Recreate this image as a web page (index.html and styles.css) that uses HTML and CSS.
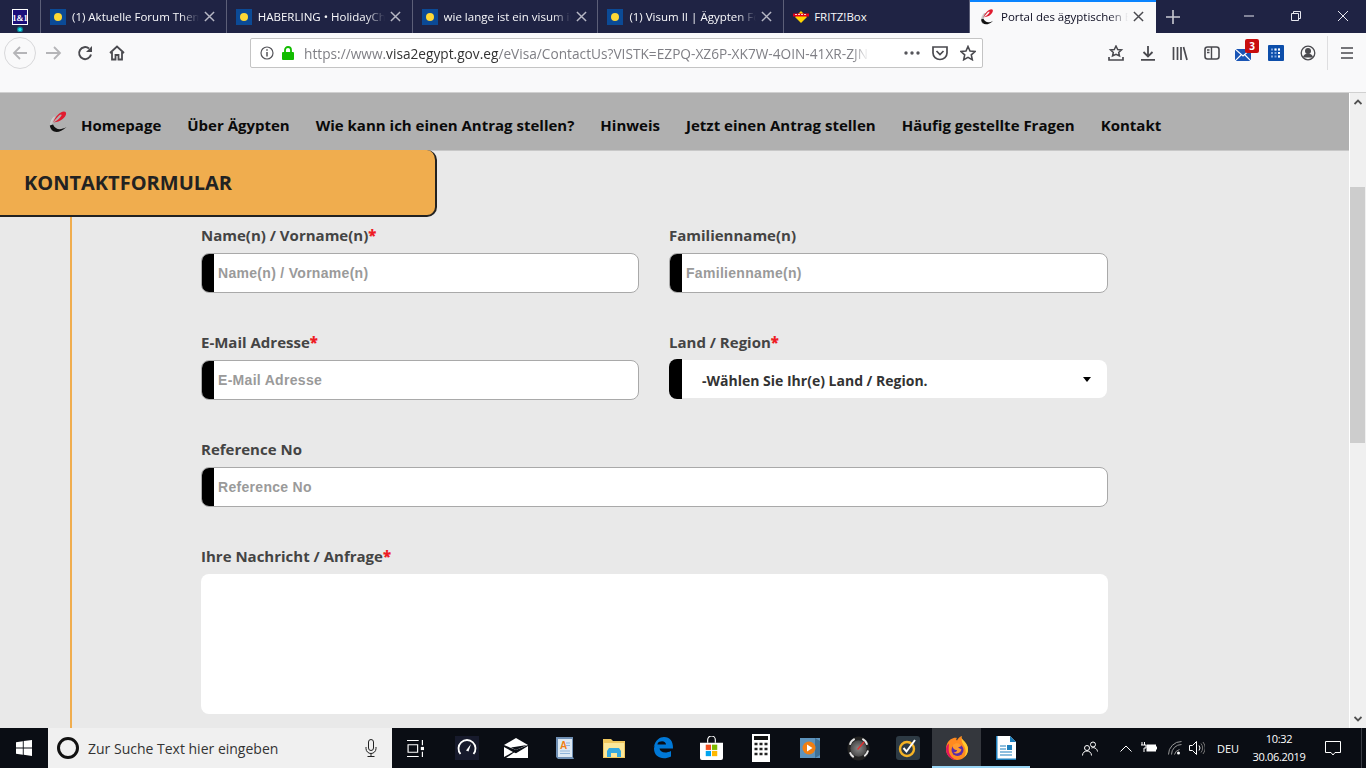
FILE: index.html
```html
<!DOCTYPE html>
<html lang="de">
<head>
<meta charset="utf-8">
<title>Portal des ägyptischen Visums</title>
<link rel="stylesheet" href="styles.css">
</head>
<body>
<svg class="defs" width="0" height="0">
  <defs>
    <linearGradient id="logo-grey" x1="0" y1="0" x2="1" y2="1"><stop offset="0" stop-color="#f4f4f4"/><stop offset="1" stop-color="#666"/></linearGradient>
    <radialGradient id="gauge" cx=".5" cy=".5" r=".5"><stop offset="0" stop-color="#8a8a8a"/><stop offset="1" stop-color="#4a4a4a"/></radialGradient>
  </defs>
  <symbol id="fav-blue" viewBox="0 0 16 16"><rect width="16" height="16" fill="#0b4a96"/><circle cx="8" cy="8" r="4" fill="#fdd835"/></symbol>
  <symbol id="x-icon" viewBox="0 0 12 12"><path d="M1 1l10 10M11 1L1 11" fill="none" stroke="currentColor" stroke-width="1.6"/></symbol>
  <symbol id="e-logo" viewBox="0 0 18 22">
    <path d="M5 5.500C.5 10 -.5 16 3 20.500 3 16 4 11.500 8.500 6Z" fill="url(#logo-grey)"/>
    <path d="M4 11.500C6 6 11 .5 15 .5 18.500 .5 17.500 5.500 13 8.500 11 10 8 11 4.500 11.500 8 9.500 11.500 7 12.500 4.500 13 3 11.500 3 10 4.500 8 6.500 6 9 4 11.500Z" fill="#e01b2f"/>
    <path d="M.8 14.500C2 21.500 9 24 17.500 16 12 19 7 19.500 4 13.500Z" fill="#111"/>
  </symbol>
</svg>

<header class="tabstrip">
  <div class="pinned">
    <svg class="brand" viewBox="0 0 16 23" width="16" height="23"><rect x=".5" y=".5" width="15" height="15" fill="#1b0e7a" stroke="#fff"/><text x="8" y="11.500" text-anchor="middle" class="brand-text">1&amp;1</text><circle cx="8" cy="20.500" r="3" fill="#0d7f92"/><circle cx="8" cy="20.500" r="1.700" fill="#19e6f2"/></svg>
  </div>
  <div class="tab"><svg class="fav"><use href="#fav-blue"/></svg><span class="tab-title">(1) Aktuelle Forum Themen</span><svg class="tab-x"><use href="#x-icon"/></svg></div>
  <div class="tab"><svg class="fav"><use href="#fav-blue"/></svg><span class="tab-title">HABERLING • HolidayCheck</span><svg class="tab-x"><use href="#x-icon"/></svg></div>
  <div class="tab"><svg class="fav"><use href="#fav-blue"/></svg><span class="tab-title">wie lange ist ein visum in</span><svg class="tab-x"><use href="#x-icon"/></svg></div>
  <div class="tab"><svg class="fav"><use href="#fav-blue"/></svg><span class="tab-title">(1) Visum II | Ägypten Forum</span><svg class="tab-x"><use href="#x-icon"/></svg></div>
  <div class="tab">
    <svg class="fav" viewBox="0 0 16 16"><path d="M8 2l6 6-6 6-6-6z" fill="#ffd400"/><path d="M0 4.500h16v3H0z" fill="#e2001a"/><path d="M2 5.500h2M5 5.500h2M8 5.500h2M11 5.500h2" stroke="#fff" stroke-width=".8"/></svg>
    <span class="tab-title plain">FRITZ!Box</span>
  </div>
  <div class="tab active"><svg class="fav"><use href="#e-logo"/></svg><span class="tab-title">Portal des ägyptischen Besuchervisums</span><svg class="tab-x"><use href="#x-icon"/></svg></div>
  <svg class="newtab" viewBox="0 0 14 14" width="14" height="14"><path d="M7 0v14M0 7h14" stroke="#c9cad3" stroke-width="1.600"/></svg>
  <div class="winctl">
    <svg viewBox="0 0 12 12" width="12" height="12"><path d="M1 6h10" stroke="#e6e6ee"/></svg>
    <svg viewBox="0 0 12 12" width="12" height="12"><path d="M1.500 3.500h7v7h-7zM3.500 3.500v-2h7v7h-2" fill="none" stroke="#e6e6ee"/></svg>
    <svg viewBox="0 0 12 12" width="12" height="12"><path d="M1 1l10 10M11 1L1 11" stroke="#e6e6ee"/></svg>
  </div>
</header>

<div class="toolbar">
  <div class="nav-buttons">
    <span class="back"><svg viewBox="0 0 16 16" width="16" height="16"><path d="M15 8H2M8 2L2 8l6 6" fill="none" stroke="#b5b5b8" stroke-width="1.800"/></svg></span>
    <svg class="tb" viewBox="0 0 16 16"><path d="M0 8h14M8 2l6 6-6 6" fill="none" stroke="#b5b5b8" stroke-width="1.800"/></svg>
    <svg class="tb" viewBox="0 0 16 16"><path d="M14 9.500A6 6 0 1 1 12 3.500" fill="none" stroke="#4a4a4f" stroke-width="2"/><path d="M15 1v6H9z" fill="#4a4a4f"/></svg>
    <svg class="tb" viewBox="0 0 16 16"><path d="M1 8l7-6.500L15 8M3 7v7.500h3.500V10h3v4.500H13V7" fill="none" stroke="#4a4a4f" stroke-width="1.800"/></svg>
  </div>
  <div class="urlbar">
    <svg class="url-info" viewBox="0 0 14 14" width="14" height="14"><circle cx="7" cy="7" r="6" fill="none" stroke="#55555a" stroke-width="1.200"/><path d="M7 6v4.500M7 3.200v1.500" stroke="#55555a" stroke-width="1.500"/></svg>
    <svg class="url-lock" viewBox="0 0 12 14" width="12" height="14"><path d="M3 6V4a3 3 0 0 1 6 0v2" fill="none" stroke="#12bc00" stroke-width="1.800"/><rect y="6" width="12" height="8" rx="1" fill="#12bc00"/></svg>
    <span class="url"><span class="url-dim">https://www.</span><span class="url-host">visa2egypt.gov.eg</span><span class="url-dim">/eVisa/ContactUs?VISTK=EZPQ-XZ6P-XK7W-4OIN-41XR-ZJN</span></span>
    <svg class="url-dots" viewBox="0 0 16 4" width="16" height="4"><circle cx="2" cy="2" r="1.700" fill="#55555a"/><circle cx="8" cy="2" r="1.700" fill="#55555a"/><circle cx="14" cy="2" r="1.700" fill="#55555a"/></svg>
    <svg class="tb-s" viewBox="0 0 16 16"><path d="M1 2h14v6a7 6.500 0 0 1-14 0z" fill="none" stroke="#4a4a4f" stroke-width="1.700"/><path d="M4.500 6L8 9.500 11.500 6" fill="none" stroke="#4a4a4f" stroke-width="1.700"/></svg>
    <svg class="tb-s" viewBox="0 0 16 16"><path d="M8 1.500l2 4.500 5 .5-3.700 3.300 1 4.900L8 12.300l-4.300 2.400 1-4.900L1 6.500 6 6z" fill="none" stroke="#4a4a4f" stroke-width="1.600"/></svg>
  </div>
  <div class="tools">
    <svg class="tool" viewBox="0 0 16 16"><path d="M8 1l1.700 3.500 3.800.4-2.800 2.500.8 3.600L8 9.300l-3.500 1.700.8-3.600L2.500 4.900l3.800-.4z" fill="none" stroke="#4a4a4f" stroke-width="1.500"/><path d="M1 12v3h14v-3" fill="none" stroke="#4a4a4f" stroke-width="1.700"/></svg>
    <svg class="tool" viewBox="0 0 16 16"><path d="M8 1v10M3.500 7L8 11.500 12.500 7M1 14.800h14" fill="none" stroke="#4a4a4f" stroke-width="1.800"/></svg>
    <svg class="tool" viewBox="0 0 16 16"><path d="M1.500 2v13M5.500 2v13M9 2v13M11.500 2l3.500 13" fill="none" stroke="#4a4a4f" stroke-width="1.700"/></svg>
    <svg class="tool" viewBox="0 0 16 16"><rect x="1" y="2" width="14" height="12" rx="2.500" fill="none" stroke="#4a4a4f" stroke-width="1.600"/><path d="M7.500 2v12M3 5h2.500M3 7.500h2.500" stroke="#4a4a4f" stroke-width="1.400"/></svg>
    <span class="mail">
      <svg class="mail-ico" viewBox="0 0 16 12" width="16" height="12"><rect width="16" height="12" fill="#1a55b5"/><path d="M0 0l8 7 8-7M0 12l6-6M16 12l-6-6" fill="none" stroke="#fff" stroke-width="1.200"/></svg>
      <span class="badge">3</span>
    </span>
    <svg class="tool" viewBox="0 0 16 16"><rect width="16" height="16" rx="1" fill="#0d4eaa"/><path d="M3 4.500h2M6.500 4.500h2M10 4.500h2M3 8h2M6.500 8h2M10 8h2M3 11.500h2M6.500 11.500h2M10 11.500h2" stroke="#7fa6e0" stroke-width="2"/><path d="M6.500 4.500h2M10 4.500h2M10 8h2M10 11.500h2" stroke="#fff" stroke-width="2"/></svg>
    <svg class="tool" viewBox="0 0 16 16"><circle cx="8" cy="8" r="6.800" fill="none" stroke="#4a4a4f" stroke-width="1.300"/><circle cx="8" cy="6" r="3" fill="#4a4a4f"/><path d="M3 12.500a5 4 0 0 1 10 0" fill="#4a4a4f"/></svg>
    <span class="tb-sep"></span>
    <svg class="tool menu" viewBox="0 0 14 12"><path d="M1 1h12M1 6h12M1 11h12" stroke="#4a4a4f" stroke-width="1.700"/></svg>
  </div>
</div>

<div class="viewport">
  <main class="page">
    <nav class="sitenav">
      <svg class="sitelogo"><use href="#e-logo"/></svg>
      <a>Homepage</a>
      <a>Über Ägypten</a>
      <a>Wie kann ich einen Antrag stellen?</a>
      <a>Hinweis</a>
      <a>Jetzt einen Antrag stellen</a>
      <a>Häufig gestellte Fragen</a>
      <a>Kontakt</a>
    </nav>
    <h1 class="banner">KONTAKTFORMULAR</h1>
    <div class="rail">
      <form class="form">
        <div class="field">
          <label>Name(n) / Vorname(n)<b>*</b></label>
          <div class="box"><span class="cap"></span><input placeholder="Name(n) / Vorname(n)"></div>
        </div>
        <div class="field">
          <label>Familienname(n)</label>
          <div class="box"><span class="cap"></span><input placeholder="Familienname(n)"></div>
        </div>
        <div class="field">
          <label>E-Mail Adresse<b>*</b></label>
          <div class="box"><span class="cap"></span><input placeholder="E-Mail Adresse"></div>
        </div>
        <div class="field">
          <label>Land / Region<b>*</b></label>
          <div class="box selectbox"><span class="cap"></span><span class="selected">-Wählen Sie Ihr(e) Land / Region.</span><span class="arrow"></span></div>
        </div>
        <div class="field wide">
          <label>Reference No</label>
          <div class="box"><span class="cap"></span><input placeholder="Reference No"></div>
        </div>
        <div class="field wide">
          <label>Ihre Nachricht / Anfrage<b>*</b></label>
          <textarea class="message"></textarea>
        </div>
      </form>
    </div>
  </main>
  <aside class="scrollbar">
    <svg class="sb-arrow" viewBox="0 0 8 6" width="8" height="6"><path d="M.5 5L4 1.500 7.500 5" fill="none" stroke="#505050" stroke-width="1.800"/></svg>
    <div class="sb-track"><div class="sb-thumb"></div></div>
    <svg class="sb-arrow" viewBox="0 0 8 6" width="8" height="6"><path d="M.5 1L4 4.500 7.500 1" fill="none" stroke="#505050" stroke-width="1.800"/></svg>
  </aside>
</div>

<footer class="taskbar">
  <div class="start"><svg viewBox="0 0 16 16" width="16" height="16"><path d="M0 2.300l6.800-1v6.200H0zM7.700 1.100L16 0v7.500H7.700zM0 8.400h6.800v6.300L0 13.700zM7.700 8.400H16V16l-8.300-1.200z" fill="#fff"/></svg></div>
  <div class="search">
    <span class="cortana"></span>
    <span class="search-text">Zur Suche Text hier eingeben</span>
    <svg class="mic" viewBox="0 0 12 18" width="12" height="18"><rect x="3.500" y=".5" width="5" height="11" rx="2.500" fill="none" stroke="#222"/><path d="M1 8v1.500a5 5 0 0 0 10 0V8M6 14.500V17M2.500 17.500h7" fill="none" stroke="#222"/></svg>
  </div>
  <div class="apps">
    <span class="app app-first"><svg viewBox="0 0 16 16" width="17" height="17"><path d="M0 .5h11M0 15.500h11M1 4.500h9v7H1zM14.500 0v5M14.500 11v5" fill="none" stroke="#fff" stroke-width="1.100"/><rect x="13" y="6.500" width="3" height="3" fill="#fff"/></svg></span>
    <span class="app"><svg viewBox="0 0 24 24" width="24" height="24"><rect width="24" height="24" fill="#171a2c"/><path d="M5.500 18A8.500 8.500 0 1 1 18.500 18" fill="none" stroke="#fff" stroke-width="1.800"/><path d="M11 14.500l5-6.500-2.500 7.500z" fill="#fff"/></svg></span>
    <span class="app"><svg viewBox="0 0 24 20" width="24" height="20"><path d="M0 7L12 0l12 7L12 12z" fill="#fff"/><path d="M0 9l9 5-9 5zM24 8v12H2l8-5.500 2 .8z" fill="#fff"/><path d="M7 9.500l16-2.500-11 5z" fill="#0a0d14"/></svg></span>
    <span class="app"><svg viewBox="0 0 20 24" width="20" height="24"><path d="M1 1h17v20l1 2H3l-2-2z" fill="#6f8fb4"/><rect x="3" y="3" width="14" height="18" fill="#dce8f4"/><text x="5" y="13" class="word-a">A</text><path d="M11 7h4M11 9.500h4M5 15h10M5 17.500h10" stroke="#8fb4da"/></svg></span>
    <span class="app"><svg viewBox="0 0 22 20" width="22" height="20"><path d="M0 1h8l2 2h12v17H0z" fill="#f0c75e"/><path d="M1 5h20v14H1z" fill="#fce79a"/><path d="M4 19v-6l2-3h10l2 3v6h-4v-4H8v4z" fill="#35a8e0"/></svg></span>
    <span class="app"><svg viewBox="0 0 20 22" width="20" height="22"><path d="M1 10C2 3 7 0 11 0c6 0 9 4 9 11.500H6.500c.3 3.500 5.500 5.500 11.500 2.500v5.500c-8 4-17 1-17-8 .3-3 2-5.500 5-7-1 1-1.500 2-1.600 3h8.600c0-3-5-5-9.500-.5-.5.600-1.500 1.700-3 3z" fill="#0078d7"/></svg></span>
    <span class="app"><svg viewBox="0 0 24 26" width="23" height="25"><path d="M8 7V4a4 4 0 0 1 8 0v3" fill="none" stroke="#fff" stroke-width="1.200"/><path d="M0 7h24v16a2 2 0 0 1-2 2H2a2 2 0 0 1-2-2z" fill="#fff"/><rect x="6" y="9" width="5.500" height="5.500" fill="#f25022"/><rect x="12.500" y="9" width="5.500" height="5.500" fill="#7fba00"/><rect x="6" y="15.500" width="5.500" height="5.500" fill="#00a4ef"/><rect x="12.500" y="15.500" width="5.500" height="5.500" fill="#ffb900"/></svg></span>
    <span class="app"><svg viewBox="0 0 18 28" width="18" height="28"><rect width="18" height="28" fill="#fff"/><rect x="2" y="2" width="14" height="4" fill="#111"/><path d="M2.500 10h3M7.500 10h3M12.500 10h3M2.500 15h3M7.500 15h3M12.500 15h3M2.500 20h3M7.500 20h3M12.500 20h3" stroke="#222" stroke-width="2.500"/></svg></span>
    <span class="app"><svg viewBox="0 0 20 20" width="20" height="20"><rect width="20" height="20" fill="#5d93bd"/><path d="M15 0l5 3v14l-5 3z" fill="#3f7196"/><circle cx="9" cy="10" r="6.500" fill="#f07f13"/><path d="M7 6.500l5.500 3.500L7 13.500z" fill="#fff"/></svg></span>
    <span class="app"><svg viewBox="0 0 24 26" width="23" height="25"><ellipse cx="12" cy="13" rx="11.500" ry="12.500" fill="#222"/><circle cx="12" cy="13" r="8.500" fill="url(#gauge)"/><path d="M3 9a10 10 0 0 1 5-6M16 3a10 10 0 0 1 5 6M22 15a10 10 0 0 1-4 6M3 17a10 10 0 0 0 4 5" fill="none" stroke="#e6e6e6" stroke-width="2"/><path d="M11 14l7-8" stroke="#e03030" stroke-width="1.500"/></svg></span>
    <span class="app"><svg viewBox="0 0 24 24" width="24" height="24"><rect width="24" height="24" rx="3" fill="#2d3a44"/><circle cx="11" cy="13" r="7" fill="none" stroke="#f5b324" stroke-width="2.400"/><path d="M7.500 12l3 3.500L19 4" fill="none" stroke="#fff" stroke-width="2"/></svg></span>
    <span class="app app-active"><svg viewBox="0 0 24 24" width="24" height="24"><path d="M2 8C4 3 9 1 12 2c-1 1-1 2 0 2.500 1-2 2-3.500 5-4.500-1 2 0 3 2 5 3 3 4 6 4 8.500C23 19 18 24 12 24 5.500 24 1 19 1 13c0-2 .3-3.500 1-5z" fill="#ff8a1f"/><path d="M17 0c-1 2 0 3 2 5 3 3 4 6 4 8.500 0 3-1.500 6-4 8 2.500-4 2-9-.5-12.500C17 6.500 16 3.500 17 0z" fill="#ffcb2e"/><path d="M1 13c0 6 4.500 11 11 11-4-1-7-4-8-8-.5-3-.3-5 0-8.500C2 9 1 11 1 13z" fill="#e3155f"/><circle cx="12.500" cy="14" r="6" fill="#5b2ca8"/><path d="M8 9c3-3 7-2 8.500 1L13 11.500l3.500 2c-1 4-5.500 5-8 3 2.500 0 3.500-1 3.500-2.500-2.500 0-5-1.500-4-5z" fill="#ff9a2e"/></svg></span>
    <span class="app app-open"><svg viewBox="0 0 20 24" width="20" height="24"><path d="M0 0h14l6 6v18H0z" fill="#fff"/><path d="M14 0l6 6h-6z" fill="#1d7fbd"/><path d="M0 0h1.500v22.500H20V24H0z" fill="#1d7fbd"/><path d="M4 10h6M4 13h6M4 16h12M4 19h12" stroke="#1d7fbd" stroke-width="1.200"/><rect x="11" y="9" width="5" height="5" fill="#1d7fbd"/></svg></span>
  </div>
  <div class="tray">
    <svg class="people" viewBox="0 0 16 15" width="16" height="15"><circle cx="11" cy="3.500" r="2.500" fill="none" stroke="#fff"/><circle cx="5" cy="7" r="2.500" fill="none" stroke="#fff"/><path d="M.5 14.500c0-6 9-6 9 0M9.500 7c2-1 5.500 0 6 3.500" fill="none" stroke="#fff"/></svg>
    <svg class="chev" viewBox="0 0 12 7" width="12" height="7"><path d="M.5 6.500L6 1l5.500 5.500" fill="none" stroke="#fff"/></svg>
    <svg class="batt" viewBox="0 0 16 12" width="16" height="12"><path d="M1 0v3M3.500 0v3" stroke="#fff"/><path d="M0 3h5v3H3v4" fill="none" stroke="#fff"/><rect x="5.500" y="2.500" width="9.500" height="7" fill="#fff"/><rect x="15" y="4.500" width="1" height="3" fill="#fff"/></svg>
    <svg class="wifi" viewBox="0 0 14 14" width="14" height="14"><path d="M.5 13.500A13 13 0 0 1 13.500.5M3.500 13.500a10 10 0 0 1 10-10M6.500 13.500a7 7 0 0 1 5-5" fill="none" stroke="#999"/><circle cx="10.500" cy="12" r="1.500" fill="#fff"/></svg>
    <svg class="sound" viewBox="0 0 16 14" width="16" height="14"><path d="M.5 4.500h3L7.500.5v13l-4-4h-3z" fill="none" stroke="#fff"/><path d="M10 4.500a4 4 0 0 1 0 5" fill="none" stroke="#fff"/><path d="M12 2.500a7 7 0 0 1 0 9M14 1a10 10 0 0 1 0 12" fill="none" stroke="#777"/></svg>
    <span class="lang">DEU</span>
    <span class="clock"><span>10:32</span><span>30.06.2019</span></span>
    <svg class="notif" viewBox="0 0 16 15" width="16" height="15"><path d="M.5.500h15v11H10l-2 2.500-2-2.500H.5z" fill="none" stroke="#fff"/></svg>
    <span class="showdesk"></span>
  </div>
</footer>
</body>
</html>
```

FILE: styles.css
```css
* { box-sizing: border-box; }
html, body { margin: 0; height: 768px; overflow: hidden; }
body { display: flex; flex-direction: column; width: 1366px; font-family: "Open Sans", "Liberation Sans", sans-serif; background: #e9e9e9; }
.defs { position: absolute; }

/* Browser tabs */
.tabstrip { display: flex; align-items: stretch; height: 33px; background: #1f2344; color: #f8f8fb; flex: none; }
.pinned { width: 41px; display: flex; justify-content: center; padding-top: 9px; border-right: 1px solid #5c5f78; padding-right: 1px; flex: none; }
.brand { display: block; }
.brand-text { font: 700 8.5px "Liberation Serif", serif; fill: #fff; }
.tab { width: 185.8px; display: flex; align-items: center; padding: 0 0 0 9px; border-right: 1px solid #5c5f78; position: relative; flex: none; }
.fav { width: 16px; height: 16px; flex: none; margin-right: 6px; }
.tab-title { width: 127px; font: 400 11.5px "Open Sans", sans-serif; white-space: nowrap; overflow: hidden; -webkit-mask-image: linear-gradient(90deg, #000 85%, transparent); mask-image: linear-gradient(90deg, #000 85%, transparent); }
.tab-title.plain { -webkit-mask-image: none; mask-image: none; margin-left: -1px; }
.tab-x { width: 11px; height: 11px; margin-left: 5px; color: #b6b7c4; flex: none; }
.tab.active { background: #f9f9fa; color: #0c0c20; border-right: 0; border-top: 2px solid #0a84ff; padding-bottom: 2px; }
.tab.active .tab-x { color: #4a4a4f; }
.newtab { margin: 10px 0 0 10px; }
.winctl { display: flex; margin-left: auto; gap: 35px; padding: 10px 17px 0 0; }

/* Browser toolbar */
.toolbar { height: 60px; flex: none; background: #f9f9fa; border-bottom: 1px solid #d0d0d0; display: flex; align-items: flex-start; padding-top: 5px; position: relative; }
.nav-buttons { display: flex; align-items: center; width: 250px; padding-left: 4px; height: 30px; flex: none; }
.back { width: 32px; height: 32px; border: 1px solid #d8d8da; border-radius: 50%; display: flex; align-items: center; justify-content: center; flex: none; margin-right: 10px; }
.tb { width: 16px; height: 16px; margin-right: 16px; flex: none; }
.nav-buttons > .tb:first-of-type { margin-right: 15px; }
.urlbar { width: 733px; height: 30px; background: #fff; border: 1px solid #c4c4c4; border-radius: 2px; display: flex; align-items: center; padding-left: 9px; flex: none; }
.url-lock { margin-left: 8px; flex: none; }
.url { width: 565px; margin-left: 10px; font: 400 13.7px "Open Sans", sans-serif; white-space: nowrap; overflow: hidden; -webkit-mask-image: linear-gradient(90deg, #000 97%, transparent); mask-image: linear-gradient(90deg, #000 97%, transparent); }
.url-dim { color: #7f7f85; }
.url-host { color: #333; }
.url-dots { margin-left: 35px; flex: none; }
.tb-s { width: 16px; height: 16px; margin-left: 12px; flex: none; }
.tools { display: flex; align-items: center; height: 30px; margin-left: 125px; flex: none; }
.tool { width: 16px; height: 16px; margin-right: 16px; flex: none; }
.mail { position: relative; width: 16px; margin: 0 17px 0 -1px; height: 16px; display: flex; align-items: flex-end; flex: none; }
.mail-ico { display: block; }
.badge { position: absolute; left: 10px; top: -6px; width: 14px; height: 14px; border-radius: 2px; background: #c80d0d; color: #fff; font: 700 10px/14px "Open Sans", sans-serif; text-align: center; }
.tb-sep { width: 1px; height: 34px; background: #dedee0; margin: 0 12px 0 -5px; flex: none; }
.menu { margin-right: 0; width: 14px; height: 12px; }

/* Page area */
.viewport { flex: 1; display: flex; min-height: 0; }
.page { flex: 1; min-width: 0; overflow: hidden; background: #e9e9e9; }
.sitenav { height: 57px; background: #b0b0b0; display: flex; align-items: center; gap: 26px; padding: 6px 0 0 49px; box-shadow: 0 1px 0 #c8c8c8; font: 700 15px "Open Sans", sans-serif; color: #0a0a0a; white-space: nowrap; }
.sitelogo { width: 18px; height: 22px; margin: -6px -12px 0 0; flex: none; }
.banner { margin: 0; width: 437px; height: 67px; padding-left: 24px; background: #f0ad4e; border: 2px solid #222; border-width: 0 2px 2px 0; border-radius: 0 10px 10px 0; font: 700 20px/66px "Open Sans", sans-serif; color: #222; position: relative; }
.rail { margin-left: 70px; border-left: 2px solid #f0ad4e; padding: 8px 0 40px 129px; }
.form { width: 907px; display: grid; grid-template-columns: 438px 439px; column-gap: 30px; row-gap: 39px; }
.wide { grid-column: 1 / -1; }
label { display: block; height: 20px; margin-bottom: 8px; font: 700 15px/20px "Open Sans", sans-serif; color: #444; }
label b { color: #ee1c25; }
.box { height: 40px; display: flex; align-items: stretch; background: #fff; border: 1px solid #a9a9a9; border-radius: 8px; overflow: hidden; }
.cap { width: 13px; margin: -1px 0 -1px -1px; background: #000; flex: none; }
input { flex: 1; min-width: 0; border: 0; outline: 0; padding: 0 0 0 4px; background: transparent; font: 700 14px "Liberation Sans", sans-serif; letter-spacing: .3px; }
input::placeholder { color: #9a9a9a; opacity: 1; }
.selectbox { border-color: transparent; align-items: center; height: 38px; margin: 1px 1px 0 0; position: relative; overflow: visible; }
.selectbox .cap { align-self: stretch; margin: -2px 0 -2px -1px; border-radius: 8px 0 0 8px; }
.selected { margin-left: 20px; padding-top: 2px; font: 700 14px "Open Sans", sans-serif; color: #333; }
.arrow { position: absolute; right: 15px; top: 16px; border: 4px solid transparent; border-top: 5px solid #000; border-bottom: 0; }
.message { display: block; width: 100%; height: 140px; border: 0; border-radius: 8px; background: #fff; resize: none; outline: 0; }

/* Scrollbar */
.scrollbar { width: 17px; flex: none; background: #f0f0f0; border-left: 1px solid #fff; display: flex; flex-direction: column; align-items: center; padding: 6px 0 6px; }
.sb-track { flex: 1; width: 100%; padding: 82px 1px 0 0; }
.sb-thumb { height: 256px; background: #cdcdcd; }
.sb-arrow { flex: none; }

/* Windows taskbar */
.taskbar { height: 40px; flex: none; background: #0a0d14; display: flex; align-items: stretch; color: #fff; }
.start { width: 48px; display: flex; align-items: center; justify-content: center; flex: none; }
.search { width: 344px; background: #f0f0f0; display: flex; align-items: center; padding-left: 9px; color: #333; flex: none; }
.cortana { width: 22px; height: 22px; border: 3px solid #111; border-radius: 50%; flex: none; }
.search-text { margin-left: 9px; font: 400 14px "Open Sans", sans-serif; width: 274px; white-space: nowrap; }
.mic { flex: none; margin-left: 3px; }
.apps { display: flex; margin-left: 1px; flex: none; }
.app { width: 49px; display: flex; align-items: center; justify-content: center; border-bottom: 2px solid transparent; border-top: 2px solid transparent; }
.app-first { padding-right: 5px; }
.app-active { background: #34373d; border-bottom-color: #99d5f5; }
.app-open { border-bottom-color: #99d5f5; background-clip: padding-box; }
.word-a { font: 700 10px "Liberation Sans", sans-serif; fill: #f07f13; }
.tray { flex: 1; display: flex; align-items: center; position: relative; font: 400 11px "Open Sans", sans-serif; }
.people { margin-left: 52px; flex: none; }
.chev { margin-left: 22px; flex: none; }
.batt { margin-left: 9px; flex: none; }
.wifi { margin-left: 11px; flex: none; }
.sound { margin-left: 7px; flex: none; }
.lang { margin-left: 12px; width: 24px; flex: none; }
.clock { margin-left: 6px; display: flex; flex-direction: column; align-items: center; line-height: 18px; width: 64px; letter-spacing: -.3px; flex: none; }
.notif { margin-left: 14px; flex: none; }
.showdesk { position: absolute; right: 4px; top: 0; bottom: 0; width: 1px; background: #3a3d45; }
```
